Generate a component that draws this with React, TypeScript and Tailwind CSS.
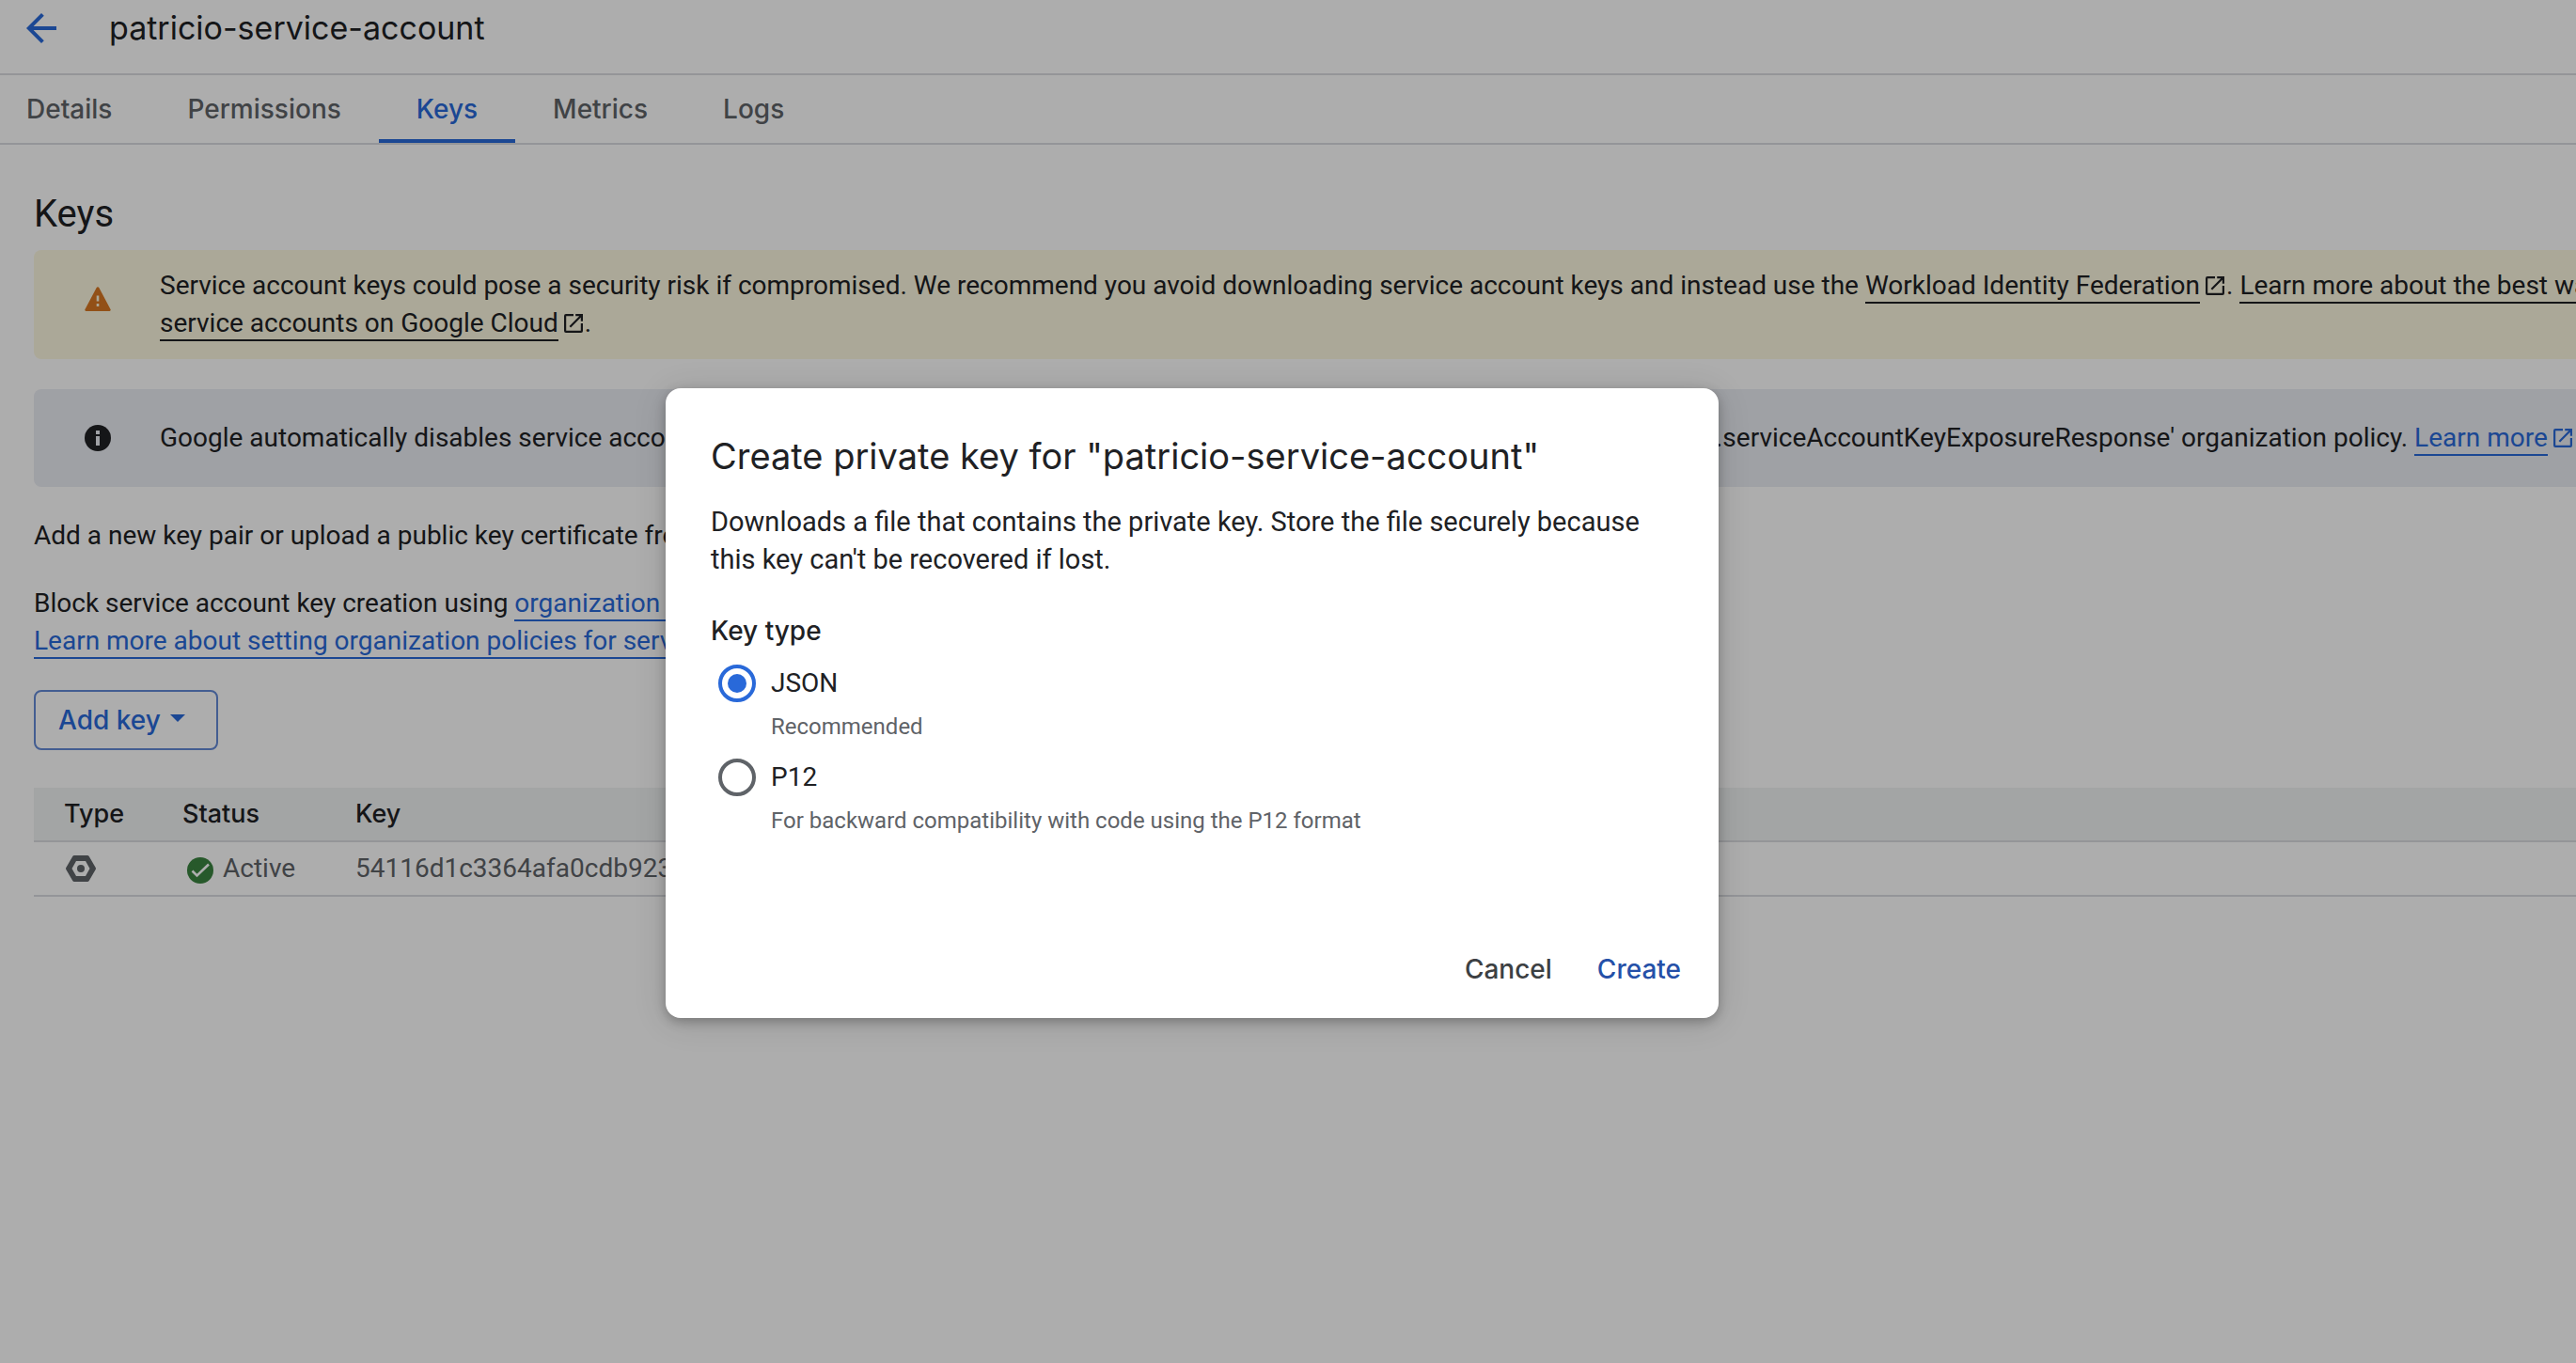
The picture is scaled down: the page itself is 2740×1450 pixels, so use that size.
import React from "react";

const display = "font-[Inter,sans-serif]";
const label = "font-[Inter,sans-serif] font-medium";

function LaunchIcon() {
  return (
    <svg viewBox="3 3 18 18" fill="currentColor" aria-hidden="true" className="mr-0.5 mb-1 ml-1.5 inline-block h-5 w-5 align-middle">
      <path d="M19 19H5V5h7V3H4.800A1.800 1.800 0 0 0 3 4.800v14.400A1.800 1.800 0 0 0 4.800 21h14.400a1.800 1.800 0 0 0 1.800-1.800V12h-2zM14 3v2h3.600l-9.600 9.600 1.400 1.400L19 6.400V10h2V3z" />
    </svg>
  );
}

function TextLink({ children, tone = "blue", icon = false }: { children: React.ReactNode; tone?: "blue" | "dark"; icon?: boolean }) {
  return (
    <a href="#" className={tone === "blue" ? "text-[#2969d9]" : "text-[#202124]"}>
      <span className="border-b-2 border-current pb-px">{children}</span>
      {icon && <LaunchIcon />}
    </a>
  );
}

const tabs = ["Details", "Permissions", "Keys", "Metrics", "Logs"];

function Tabs() {
  return (
    <nav className={`${label} flex h-[74px] border-b-2 border-[#dadce0]`}>
      {tabs.map((tab) => (
        <a
          key={tab}
          href="#"
          aria-current={tab === "Keys" ? "page" : undefined}
          className={
            tab === "Keys"
              ? "flex items-center border-b-4 border-[#2969d9] px-10 pt-1 text-[#2969d9]"
              : "flex items-center border-b-4 border-transparent px-10 pt-1 text-[#5f6368] first:pl-7"
          }
        >
          {tab}
        </a>
      ))}
    </nav>
  );
}

function WarningBanner() {
  return (
    <div className="flex items-center gap-13 overflow-hidden rounded-l-lg bg-[#fdf8e0] py-[18px] pl-[54px] whitespace-nowrap">
      <svg viewBox="0 0 28 26" className="mb-3 h-[26px] w-7 shrink-0" role="img" aria-label="Warning">
        <path d="M12.700 1a1.500 1.500 0 0 1 2.600 0l12.200 23a1.300 1.300 0 0 1-1.200 2H1.700a1.300 1.300 0 0 1-1.200-2z" fill="#d87722" />
        <path d="M12.700 9.500h2.600v6h-2.600zM12.700 18h2.600v3h-2.600z" fill="#fdf8e0" />
      </svg>
      <p>
        Service account keys could pose a security risk if compromised. We recommend you avoid downloading service account keys and instead use the{" "}
        <TextLink tone="dark" icon>Workload Identity Federation</TextLink>.{" "}
        <TextLink tone="dark" icon>
          Learn more about the best way to authenticate
          <br />
          service accounts on Google Cloud
        </TextLink>
        .
      </p>
    </div>
  );
}

function InfoBanner() {
  return (
    <div className="mt-8 flex h-[104px] items-center gap-13 overflow-hidden rounded-l-lg bg-[#ebedf3] pl-[54px] whitespace-nowrap">
      <svg viewBox="0 0 28 28" className="h-7 w-7 shrink-0" role="img" aria-label="Information">
        <circle cx="14" cy="14" r="14" fill="#202124" />
        <path d="M12 6h4v4h-4zM12 12h4v10h-4z" fill="#ebedf3" />
      </svg>
      <p>
        Google automatically disables service account keys detected in public repositories. You can customize this behavior by using the
        'iam.serviceAccountKeyExposureResponse' organization policy. <TextLink icon>Learn more</TextLink>
      </p>
    </div>
  );
}

function KeysTable() {
  return (
    <table className="mt-10 w-full table-fixed border-collapse text-left">
      <colgroup>
        <col className="w-[142px]" />
        <col className="w-[184px]" />
        <col />
      </colgroup>
      <thead>
        <tr className={`${label} h-[57px] border-b-2 border-[#dadce0] bg-[#f1f3f4] text-[27px]`}>
          <th scope="col" className="pl-8 font-medium">Type</th>
          <th scope="col" className="pl-4 font-medium">Status</th>
          <th scope="col" className="pl-4 font-medium">Key</th>
        </tr>
      </thead>
      <tbody>
        <tr className="h-[58px] border-b-2 border-[#dadce0] text-[#5f6368]">
          <td className="pl-[34px]">
            <svg viewBox="0 0 32 28" className="h-7 w-8" role="img" aria-label="Key">
              <path
                fillRule="evenodd"
                fill="currentColor"
                d="M9 0h14a2 2 0 0 1 1.700 1l7 12a2 2 0 0 1 0 2l-7 12a2 2 0 0 1-1.700 1H9a2 2 0 0 1-1.700-1l-7-12a2 2 0 0 1 0-2l7-12A2 2 0 0 1 9 0zM11 6 6.500 14 11 22h10l4.500-8L21 6z"
              />
              <circle cx="16" cy="14" r="4" fill="currentColor" />
            </svg>
          </td>
          <td className="pl-[21px]">
            <span className="flex items-center gap-2.5">
              <svg viewBox="0 0 28 28" className="mt-1 h-7 w-7" aria-hidden="true">
                <circle cx="14" cy="14" r="14" fill="#3a8440" />
                <path d="M5.500 14.500l5 5L23 7.500" fill="none" stroke="#fff" strokeWidth="2.500" />
              </svg>
              Active
            </span>
          </td>
          <td className="pl-4">54116d1c3364afa0cdb923</td>
        </tr>
      </tbody>
    </table>
  );
}

function KeyTypeOption({ value, hint, checked = false }: { value: string; hint: string; checked?: boolean }) {
  return (
    <div className="mb-3.5 grid grid-cols-[40px_1fr] gap-x-4 gap-y-1.5 pl-2">
      <input
        id={value}
        type="radio"
        name="keyType"
        defaultChecked={checked}
        className="h-10 w-10 appearance-none rounded-full border-4 border-[#5f6368] bg-clip-content p-1.5 checked:border-[#2969d9] checked:bg-[#2969d9]"
      />
      <label htmlFor={value}>{value}</label>
      <p className="col-start-2 text-2xl leading-10 text-[#5f6368]">{hint}</p>
    </div>
  );
}

function CreateKeyDialog() {
  return (
    <section
      role="dialog"
      aria-labelledby="dialog-title"
      className="flex min-h-[670px] w-[1120px] flex-col rounded-2xl bg-white px-12 pt-12 shadow-[0_4px_12px_rgba(0,0,0,0.25),0_4px_36px_rgba(0,0,0,0.12)]"
    >
      <h2 id="dialog-title" className={`${display} text-[38px] leading-12`}>
        Create private key for "patricio-service-account"
      </h2>
      <p className="mt-6.5 text-[29px]">
        Downloads a file that contains the private key. Store the file securely because this key can't be recovered if lost.
      </p>
      <fieldset className="mt-9">
        <legend className={`${label} mb-4`}>Key type</legend>
        <KeyTypeOption value="JSON" hint="Recommended" checked />
        <KeyTypeOption value="P12" hint="For backward compatibility with code using the P12 format" />
      </fieldset>
      <div className={`${label} -mr-2 mt-auto flex justify-end gap-12 pb-8`}>
        <button type="button" className="text-[#3c4043]">Cancel</button>
        <button type="button" className="text-[#2550a8]">Create</button>
      </div>
    </section>
  );
}

export default function App() {
  return (
    <div className="relative min-h-screen overflow-hidden bg-white font-[Roboto,sans-serif] text-[28px] leading-10 text-[#202124]">
      <header className="flex h-20 items-center gap-14 border-b-2 border-[#dadce0] pb-[18px] pl-7">
        <button type="button" aria-label="Back">
          <svg viewBox="0 0 32 32" className="h-8 w-8" fill="#2969d9" aria-hidden="true">
            <path d="M32 14H7.600L18.800 2.800 16 0 0 16l16 16 2.800-2.800L7.600 18H32z" />
          </svg>
        </button>
        <span className={`${display} text-[34px]`}>patricio-service-account</span>
      </header>
      <Tabs />
      <main className="pl-9">
        <h1 className="pt-13.5 pb-4.5 text-[40px]">Keys</h1>
        <WarningBanner />
        <InfoBanner />
        <p className="mt-8">Add a new key pair or upload a public key certificate from an existing key pair.</p>
        <p className="mt-8">
          Block service account key creation using <TextLink icon>organization policies</TextLink>.
          <br />
          <TextLink icon>Learn more about setting organization policies for service accounts</TextLink>
        </p>
        <button
          type="button"
          className={`${label} mt-8 flex h-16 w-[196px] items-center gap-2.5 rounded-lg border-2 border-[#6389d6] pl-6 text-[#2969d9]`}
        >
          Add key
          <svg viewBox="0 0 16 8" className="mb-1 h-2 w-4" fill="currentColor" aria-hidden="true">
            <path d="M0 0h16L8 8z" />
          </svg>
        </button>
        <KeysTable />
      </main>
      <div className="absolute inset-0 flex items-start justify-center bg-black/32 pt-[413px] pr-[204px]">
        <CreateKeyDialog />
      </div>
    </div>
  );
}
